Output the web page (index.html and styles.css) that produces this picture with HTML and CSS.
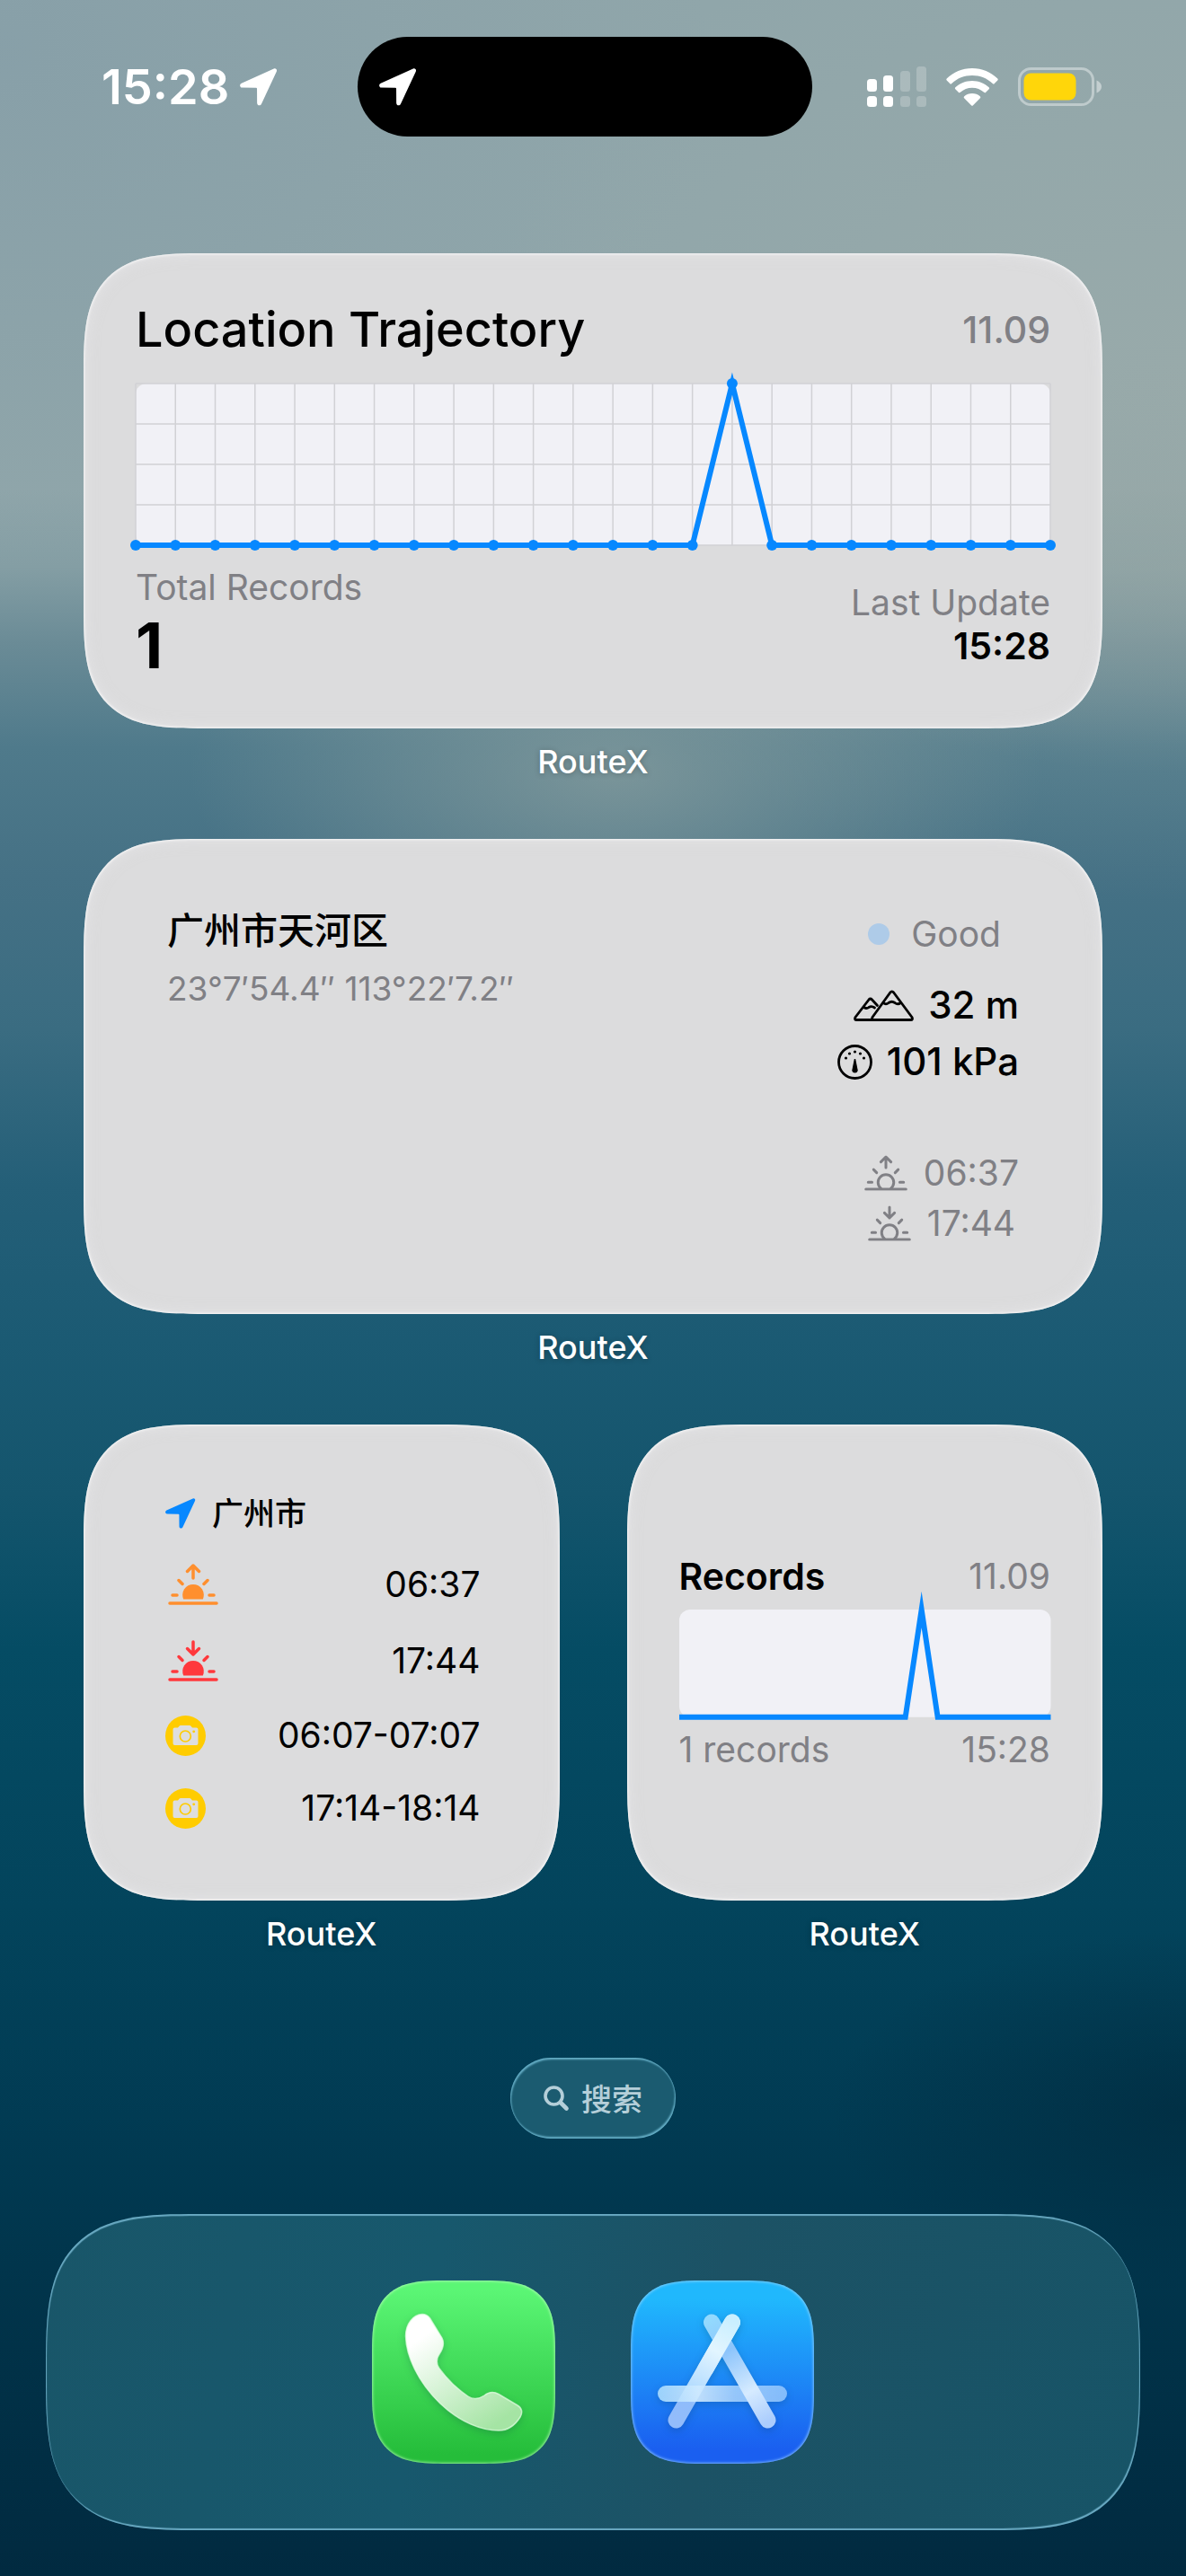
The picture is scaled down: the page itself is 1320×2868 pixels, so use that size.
FILE: index.html
```html
<!DOCTYPE html>
<html lang="zh-CN">
<head>
    <meta charset="UTF-8">
    <meta name="viewport" content="width=device-width, initial-scale=1.0">
    <title>RouteX Widgets</title>
    <link rel="stylesheet" href="styles.css">
</head>
<body>
    <!-- Shared icons -->
    <svg class="sprite" aria-hidden="true">
        <symbol id="icon-location" viewBox="0 0 34 34">
            <path d="M30.6 .4 L1.4 13.6 C-.6 14.6 -.2 17.4 2 17.5 L14.6 17.7 Q15.4 17.7 15.4 18.5 L15.5 31.4 C15.6 33.8 18.4 34.2 19.4 32.2 L33 3 C33.8 1.2 32.4 -.4 30.6 .4Z" fill="currentColor"/>
        </symbol>
        <symbol id="icon-rays" viewBox="0 0 56 46">
            <path d="M2 44H54M5 35H10M46 35H51M12 18.5L16 22.5M44 18.5L40 22.5"/>
        </symbol>
        <symbol id="icon-up" viewBox="0 0 56 46">
            <path d="M28 16V2M21.5 8.5L28 2L34.5 8.5"/>
        </symbol>
        <symbol id="icon-down" viewBox="0 0 56 46">
            <path d="M28 2V16M21.5 9.5L28 16L34.5 9.5"/>
        </symbol>
        <symbol id="icon-camera" viewBox="0 0 45 45">
            <circle cx="22.5" cy="22.5" r="22.5" fill="#ffcc00"/>
            <path d="M10.5 13.5H14L15.5 11.8Q16 11 17 11H27Q28 11 28.5 11.8L30 13.5H34.5Q36.5 13.5 36.5 15.5V31Q36.5 33 34.5 33H10.5Q8.5 33 8.5 31V15.5Q8.5 13.5 10.5 13.5Z" fill="#dedede"/>
            <circle cx="22.3" cy="23" r="6" fill="none" stroke="#ffcc00" stroke-width="1.7"/>
            <circle cx="31.7" cy="17.8" r="1.4" fill="#ffcc00"/>
        </symbol>
    </svg>

    <header class="status-bar">
        <div class="status-left">
            <span class="clock">15:28</span>
            <svg class="location"><use href="#icon-location"/></svg>
        </div>
        <div class="island">
            <svg class="location"><use href="#icon-location"/></svg>
        </div>
        <div class="status-right">
            <svg class="signal" viewBox="0 0 66 46" fill="#fff">
                <rect x="0" y="14" width="11" height="14" rx="3.5"/>
                <rect x="18" y="10" width="11" height="18" rx="3.5"/>
                <rect x="0" y="33" width="11" height="12" rx="3.5"/>
                <rect x="18" y="33" width="11" height="12" rx="3.5"/>
                <g opacity=".22">
                    <rect x="37" y="5" width="11" height="23" rx="3.5"/>
                    <rect x="55" y="0" width="11" height="28" rx="3.5"/>
                    <rect x="37" y="33" width="11" height="12" rx="3.5"/>
                    <rect x="55" y="33" width="11" height="12" rx="3.5"/>
                </g>
            </svg>
            <svg class="wifi" viewBox="0 0 58 42" fill="#fff">
                <path d="M29 0C40 0 50 4.400 57.300 11.500Q58.300 12.500 57.300 13.500L53.800 17Q52.800 18 51.800 17C45.800 11.200 37.800 8 29 8S12.200 11.200 6.200 17Q5.200 18 4.200 17L.7 13.500Q-.3 12.500 .7 11.500C8 4.400 18 0 29 0Z"/>
                <path d="M29 14C36.200 14 42.800 16.800 47.700 21.300Q48.700 22.300 47.700 23.300L44.200 26.700Q43.200 27.700 42.200 26.800C38.600 23.700 34 21.800 29 21.800S19.400 23.700 15.800 26.800Q14.800 27.700 13.800 26.700L10.300 23.300Q9.300 22.300 10.300 21.300C15.200 16.800 21.800 14 29 14Z"/>
                <path d="M29 28C32.300 28 35.400 29.200 37.800 31.200Q38.900 32.200 37.900 33.200L30 41.200Q29 42.200 28 41.200L20.100 33.200Q19.100 32.200 20.200 31.200C22.600 29.200 25.700 28 29 28Z"/>
            </svg>
            <svg class="battery" viewBox="0 0 94 43">
                <rect x="1.500" y="1.500" width="82" height="40" rx="13" fill="none" stroke="#fff" stroke-opacity=".4" stroke-width="3"/>
                <path d="M87.500 14.500C91 16 93 18.500 93 21.500S91 27 87.500 28.500Z" fill="#fff" fill-opacity=".45"/>
                <rect x="6.500" y="6.500" width="58" height="30" rx="8" fill="#ffd60a"/>
            </svg>
        </div>
    </header>

    <main class="widgets">
        <figure class="widget wide">
            <section class="card trajectory">
                <div class="row">
                    <h1>Location Trajectory</h1>
                    <span class="date">11.09</span>
                </div>
                <svg class="chart" id="trajectoryChart" viewBox="0 0 1018 180"></svg>
                <div class="row">
                    <div>
                        <p class="caption">Total Records</p>
                        <p class="total">1</p>
                    </div>
                    <div class="update">
                        <p class="caption">Last Update</p>
                        <p class="strong">15:28</p>
                    </div>
                </div>
            </section>
            <figcaption>RouteX</figcaption>
        </figure>

        <figure class="widget wide">
            <section class="card place">
                <div>
                    <h2>广州市天河区</h2>
                    <p class="coords">23°7′54.4″ 113°22′7.2″</p>
                </div>
                <div class="facts">
                    <p class="air"><span class="dot"></span>Good</p>
                    <div class="metrics">
                        <p class="metric">
                            <svg class="mountains" viewBox="0 0 67 35" fill="none" stroke="currentColor" stroke-width="2.800" stroke-linejoin="round" stroke-linecap="round">
                                <path d="M40.800 3Q42.700 .8 44.600 3L65 30.500Q66.500 33.500 63.500 33.500H22.500Q19.500 33.500 21 30.500Z"/>
                                <path d="M33 14.500Q36 17 39 14.500Q42.500 12 46 14.500Q49 17 52.500 14.500"/>
                                <path d="M21.500 33.500H3.500Q.5 33.500 2 30.500L17 11Q18.700 9 20.500 11L26.500 17.500M11.500 19.500Q14.500 21.500 17 19.500Q20 17.500 23.500 20"/>
                            </svg>
                            32 m
                        </p>
                        <p class="metric">
                            <svg class="gauge" viewBox="0 0 39 39">
                                <circle cx="19.500" cy="19.500" r="18" fill="none" stroke="currentColor" stroke-width="2.800"/>
                                <g fill="currentColor">
                                    <circle cx="9.500" cy="15" r="1.600"/>
                                    <circle cx="13.500" cy="10" r="1.600"/>
                                    <circle cx="19.500" cy="8" r="1.600"/>
                                    <circle cx="25.500" cy="10" r="1.600"/>
                                    <circle cx="29.500" cy="15" r="1.600"/>
                                    <path d="M18.800 16H20.200L22.700 28.500Q22.500 31.500 19.500 31.500T16.300 28.500Z"/>
                                </g>
                            </svg>
                            101 kPa
                        </p>
                    </div>
                    <div class="sun-times">
                        <p>
                            <svg class="sun-small" viewBox="0 0 56 46"><use href="#icon-rays"/><use href="#icon-up"/><path d="M21.500 43A10.200 10.200 0 1 1 34.500 43"/></svg>
                            06:37
                        </p>
                        <p>
                            <svg class="sun-small" viewBox="0 0 56 46"><use href="#icon-rays"/><use href="#icon-down"/><path d="M21.500 43A10.200 10.200 0 1 1 34.500 43"/></svg>
                            17:44
                        </p>
                    </div>
                </div>
            </section>
            <figcaption>RouteX</figcaption>
        </figure>

        <figure class="widget">
            <section class="card sun">
                <h3><svg class="pin"><use href="#icon-location"/></svg>广州市</h3>
                <p class="sun-row sunrise">
                    <svg class="sun-icon" viewBox="0 0 56 46"><use href="#icon-rays"/><use href="#icon-up"/><path class="disc" d="M17.200 39.500A11.800 11.800 0 1 1 38.800 39.500Z"/></svg>
                    <time>06:37</time>
                </p>
                <p class="sun-row sunset">
                    <svg class="sun-icon" viewBox="0 0 56 46"><use href="#icon-rays"/><use href="#icon-down"/><path class="disc" d="M17.200 39.500A11.800 11.800 0 1 1 38.800 39.500Z"/></svg>
                    <time>17:44</time>
                </p>
                <p class="photo-row">
                    <svg class="camera"><use href="#icon-camera"/></svg>
                    <span>06:07-07:07</span>
                </p>
                <p class="photo-row">
                    <svg class="camera"><use href="#icon-camera"/></svg>
                    <span>17:14-18:14</span>
                </p>
            </section>
            <figcaption>RouteX</figcaption>
        </figure>

        <figure class="widget">
            <section class="card records">
                <div class="row">
                    <p class="strong">Records</p>
                    <p class="caption">11.09</p>
                </div>
                <svg class="chart" id="recordsChart" viewBox="0 0 414 120"></svg>
                <div class="row">
                    <p class="caption">1 records</p>
                    <p class="caption">15:28</p>
                </div>
            </section>
            <figcaption>RouteX</figcaption>
        </figure>
    </main>

    <button class="search" type="button">
        <svg viewBox="0 0 28 28" fill="none" stroke="currentColor" stroke-linecap="round">
            <circle cx="11.500" cy="11.500" r="9.500" stroke-width="3.600"/>
            <path d="M19 19L25.500 25.500" stroke-width="4.600"/>
        </svg>
        搜索
    </button>

    <nav class="dock">
        <a class="app phone" href="#phone" aria-label="Phone">
            <svg viewBox="0 0 204 204">
                <defs>
                    <linearGradient id="phoneFill" x1="0" y1="0" x2=".7" y2="1">
                        <stop offset=".2" stop-color="#fff"/>
                        <stop offset="1" stop-color="#a5e4a4"/>
                    </linearGradient>
                </defs>
                <path d="M56 37.500C46 38 37.500 48 37.500 62C38 84 51 113 76 137C98 158 122 167 141 167C153 167 160 160 165 152C168 147 167 142 162 139L141 126.500C135 123 130 124 125 128C119 132 113 133 107 129C95 121 83 109 75 98C71 93 72 86 75 82C79 76 81 70 78 64L64.500 42C62 38.500 59 37.500 56 37.500Z" fill="url(#phoneFill)" stroke="#e6ffe6" stroke-opacity=".7" stroke-width="1.500"/>
            </svg>
        </a>
        <a class="app store" href="#store" aria-label="App Store">
            <svg viewBox="0 0 204 204" fill="none" stroke-linecap="round" stroke-width="18">
                <defs>
                    <linearGradient id="leftBar" gradientUnits="userSpaceOnUse" x1="113" y1="44" x2="50" y2="157">
                        <stop offset="0" stop-color="#c9efff"/>
                        <stop offset=".3" stop-color="#e2f5ff"/>
                        <stop offset=".68" stop-color="#b4dcff"/>
                        <stop offset=".8" stop-color="#8fbcfb"/>
                        <stop offset="1" stop-color="#93bcfb"/>
                    </linearGradient>
                    <linearGradient id="rightBar" gradientUnits="userSpaceOnUse" x1="89" y1="44" x2="153" y2="157">
                        <stop offset="0" stop-color="#93d9fe"/>
                        <stop offset=".3" stop-color="#8cc4fb"/>
                        <stop offset=".7" stop-color="#d6ebff"/>
                        <stop offset="1" stop-color="#abcdfd"/>
                    </linearGradient>
                    <linearGradient id="crossBar" gradientUnits="userSpaceOnUse" x1="30" y1="0" x2="173" y2="0">
                        <stop offset="0" stop-color="#a9dcff"/>
                        <stop offset=".32" stop-color="#cfeaff"/>
                        <stop offset=".6" stop-color="#a3d0fd"/>
                        <stop offset="1" stop-color="#8fc4fe"/>
                    </linearGradient>
                </defs>
                <path d="M50.500 155.500L113 46.500" stroke="url(#leftBar)"/>
                <path d="M39 126H165" stroke="url(#crossBar)" stroke-opacity=".9"/>
                <path d="M90 46.500L152.500 155.500" stroke="url(#rightBar)"/>
                <path d="M83 99L113 46.500" stroke="url(#leftBar)"/>
            </svg>
        </a>
    </nav>

    <script>
        // records per hour, 00:00 - 23:00
        const hourly = [0, 0, 0, 0, 0, 0, 0, 0, 0, 0, 0, 0, 0, 0, 0, 1, 0, 0, 0, 0, 0, 0, 0, 0];

        function drawChart(id, width, height, showGrid) {
            const max = Math.max(...hourly);
            const step = width / (hourly.length - 1);
            const points = hourly.map((count, i) => [i * step, height - count / max * height]);
            let svg = `<rect class="plot" width="${width}" height="${height}" rx="12"/>`;

            if (showGrid) {
                let grid = '';
                points.forEach(([x]) => grid += `M${x} 0V${height}`);
                for (let i = 0; i <= 4; i++) {
                    grid += `M0 ${height / 4 * i}H${width}`;
                }
                svg += `<path class="grid" d="${grid}"/>`;
            }

            svg += `<polyline class="line" points="${points.join(' ')}"/>`;

            if (showGrid) {
                svg += points.map(([x, y]) => `<circle class="point" cx="${x}" cy="${y}" r="6"/>`).join('');
            }

            document.getElementById(id).innerHTML = svg;
        }

        drawChart('trajectoryChart', 1018, 180, true);
        drawChart('recordsChart', 414, 120, false);
    </script>
</body>
</html>
```
FILE: styles.css
```css
* {
    box-sizing: border-box;
}
body {
    margin: 0;
    min-height: 100vh;
    padding: 41px 0 50px;
    font-family: Inter, "Noto Sans CJK SC", sans-serif;
    font-size: 39px;
    line-height: 48px;
    color: #000;
    background:
        radial-gradient(ellipse 30% 7% at 100% 82%, rgba(0, 36, 54, 0.5), transparent),
        radial-gradient(ellipse 36% 8% at 52% 30%, rgba(146, 164, 162, 0.65), transparent),
        radial-gradient(ellipse 40% 8% at 100% 22%, rgba(150, 166, 164, 0.5), transparent),
        radial-gradient(ellipse 60% 20% at 0% 2%, rgba(120, 148, 165, 0.35), transparent),
        radial-gradient(ellipse 60% 20% at 100% 15%, rgba(165, 176, 170, 0.4), transparent),
        linear-gradient(#90a6aa 0%, #90a6aa 19%, #849ea4 22%, #6a8b96 25%, #4f7a8b 29%, #457185 34%, #3a6c81 40%, #245f78 46%, #1b5a73 52%, #14556d 58%, #054c64 64%, #03445c 74%, #013a52 83%, #013147 92%, #012a40 100%);
    background-color: #013147;
}
h1, h2, h3, p, figure {
    margin: 0;
    font-weight: 500;
}
.sprite {
    display: none;
}
svg {
    display: block;
    overflow: visible;
    flex: none;
}

/* Status bar */
.status-bar {
    display: grid;
    grid-template-columns: 305fr 506px 323fr;
    align-items: center;
    margin-bottom: 130px;
    padding: 0 93px;
    color: #fff;
}
.status-left {
    display: flex;
    align-items: center;
    gap: 12px;
    padding-left: 20px;
}
.clock {
    font-size: 54px;
    font-weight: 600;
}
.location {
    width: 42px;
    height: 42px;
}
.island {
    display: flex;
    align-items: center;
    height: 111px;
    padding: 0 24px;
    border-radius: 56px;
    background: #000;
}
.status-right {
    display: flex;
    align-items: center;
    justify-content: flex-end;
    gap: 22px;
}
.signal {
    width: 66px;
    height: 46px;
}
.wifi {
    width: 58px;
    height: 42px;
}
.battery {
    width: 94px;
    height: 43px;
}

/* Widgets */
.widgets {
    display: grid;
    grid-template-columns: 1fr 1fr;
    gap: 65px 75px;
    padding: 0 93px;
}
.wide {
    grid-column: span 2;
}
.card {
    display: flex;
    flex-direction: column;
    justify-content: center;
    aspect-ratio: 1;
    padding: 0 58px;
    border-radius: 92px;
    background: #dcdcdd;
    box-shadow: inset 0 0 3px 1px rgba(255, 255, 255, 0.7), inset 0 0 16px rgba(240, 240, 244, 0.5);
}
.wide .card {
    aspect-ratio: 15 / 7;
}
figcaption {
    padding-top: 16px;
    font-size: 36px;
    line-height: 42px;
    font-weight: 500;
    text-align: center;
    color: #fff;
    text-shadow: 0 1px 6px rgba(0, 0, 0, 0.25);
}
.row {
    display: flex;
    justify-content: space-between;
    align-items: center;
}
.caption {
    font-weight: 400;
    color: #808085;
}
.strong {
    font-size: 41px;
    font-weight: 600;
}

/* Charts */
.chart {
    width: 100%;
}
.plot {
    fill: #f1f1f6;
}
.grid {
    fill: none;
    stroke: #d1d1d5;
    stroke-width: 1.5;
}
.line {
    fill: none;
    stroke: #0788ff;
    stroke-width: 6;
    stroke-miterlimit: 10;
}
.point {
    fill: #0788ff;
}

.trajectory h1 {
    font-size: 54px;
    line-height: 66px;
}
.trajectory .chart {
    margin: 27px 0 23px;
}
.date {
    font-size: 41px;
    color: #808085;
}
.total {
    font-size: 70px;
    line-height: 82px;
    font-weight: 700;
}
.update {
    text-align: right;
}

/* Place */
.place {
    flex-direction: row;
    justify-content: space-between;
    padding: 77px 93px;
}
.place h2 {
    font-size: 41px;
    line-height: 50px;
}
.coords {
    margin-top: 16px;
    font-size: 37px;
    font-weight: 400;
    color: #808085;
}
.facts {
    display: flex;
    flex-direction: column;
    align-items: flex-end;
}
.air {
    display: flex;
    align-items: center;
    gap: 24px;
    padding: 5px 20px;
    font-weight: 400;
    color: #808085;
}
.dot {
    width: 24px;
    height: 24px;
    border-radius: 50%;
    background: #aecbe8;
}
.metrics {
    display: flex;
    flex-direction: column;
    align-items: flex-end;
    gap: 15px;
    margin-top: 26px;
    font-size: 42px;
}
.metric {
    display: flex;
    align-items: center;
    gap: 16px;
}
.mountains {
    width: 67px;
    height: 35px;
}
.gauge {
    width: 39px;
    height: 39px;
}
.sun-times {
    display: flex;
    flex-direction: column;
    align-items: center;
    gap: 8px;
    margin-top: auto;
    color: #808085;
}
.sun-times p {
    display: flex;
    align-items: center;
    gap: 18px;
    font-weight: 400;
}
.sun-small {
    width: 48px;
    height: 40px;
}
.sun-small, .sun-icon {
    fill: none;
    stroke: currentColor;
    stroke-width: 3.5;
    stroke-linecap: round;
    stroke-linejoin: round;
}

/* Sun and photo times */
.sun {
    gap: 35px;
    padding: 0 88px 0 91px;
}
.sun h3 {
    display: flex;
    align-items: center;
    gap: 18px;
    font-size: 35px;
    line-height: 38px;
}
.pin {
    width: 34px;
    height: 34px;
    color: #0788ff;
}
.sun-row, .photo-row {
    display: flex;
    align-items: center;
    justify-content: space-between;
    height: 50px;
    font-weight: 400;
}
.photo-row {
    height: 46px;
}
.sun-icon {
    width: 56px;
    height: 46px;
    margin-left: 3px;
}
.sunrise .sun-icon {
    color: #ff8f2e;
}
.sunset .sun-icon {
    color: #ff383c;
}
.sun-row time {
    color: #000;
}
.disc {
    fill: currentColor;
    stroke: none;
}
.camera {
    width: 45px;
    height: 45px;
}

/* Records */
.records .chart {
    margin: 13px 0 12px;
}

/* Search */
.search {
    display: flex;
    align-items: center;
    justify-content: center;
    gap: 14px;
    width: 184px;
    height: 90px;
    margin: 117px auto 84px;
    padding: 0;
    border: 0;
    border-radius: 45px;
    background: #1b5b70;
    box-shadow: inset 1px 2px 2px rgba(120, 195, 220, 0.8), inset -1px -2px 2px rgba(120, 195, 220, 0.8);
    font-family: inherit;
    font-size: 34px;
    font-weight: 500;
    color: #b5cfd9;
}
.search svg {
    width: 28px;
    height: 28px;
}

/* Dock */
.dock {
    display: flex;
    justify-content: center;
    align-items: center;
    gap: 84px;
    height: 352px;
    margin: 0 51px;
    border-radius: 116px;
    background: linear-gradient(100deg, #195669, #17586d 35%, #1c5265 60%, #175467);
    box-shadow: inset 1px 2px 1px rgba(120, 185, 210, 0.85), inset -1px -2px 1px rgba(120, 185, 210, 0.85);
}
.app {
    width: 204px;
    height: 204px;
    border-radius: 56px;
}
.app svg {
    filter: drop-shadow(0 3px 4px rgba(0, 40, 60, 0.2));
}
.phone {
    background: linear-gradient(#5bf675 5%, #25bd3a 95%);
    box-shadow: inset 0 0 3px 1px rgba(190, 255, 190, 0.7);
}
.store {
    background: linear-gradient(#20b8fd 10%, #1a5ff0 92%);
    box-shadow: inset 0 0 3px 1px rgba(160, 215, 255, 0.7);
}

/* smoother corners where the browser can draw them */
@supports (corner-shape: squircle) {
    .card {
        border-radius: 136px;
        corner-shape: superellipse(1.65);
    }
    .dock {
        border-radius: 170px;
        corner-shape: superellipse(1.65);
    }
    .app {
        border-radius: 84px;
        corner-shape: superellipse(1.65);
    }
}
```
